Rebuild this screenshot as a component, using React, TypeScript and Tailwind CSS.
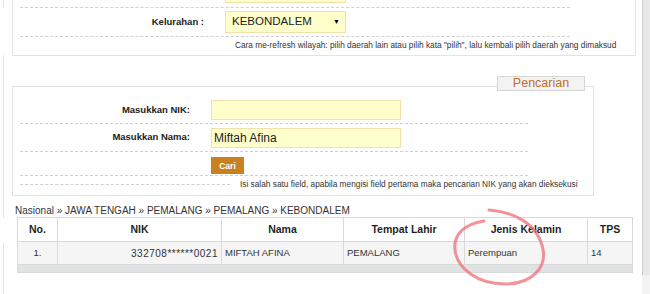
const dash = 'border-b border-dashed border-[#cfcfcf]';

const LeftRule = () => (
	<div className="w-[4px] flex flex-col shrink-0">
		<div className="h-[8px] border-r border-[#e6e6e6]" />
		<div className="h-[47px]" />
		<div className="h-[163px] border-r border-[#e6e6e6]" />
		<div className="h-[25px]" />
		<div className="flex-1 border-r border-[#e6e6e6]" />
	</div>
);

const FormRow = ({ label, labelWidth, children, className }: { label: string; labelWidth: string; children: React.ReactNode; className: string }) => (
	<div className={`flex items-center ${dash} ${className}`}>
		<div className={`${labelWidth} text-right pr-[11px] text-[9.5px] font-bold text-[#222]`}>{label}</div>
		<div className="pl-[10px]">{children}</div>
	</div>
);

const WilayahPanel = () => (
	<div className="ml-[8px] w-[624px] h-[56px] border-x border-b border-[#e3e3e3] px-[7px]">
		<div className="w-[550px]">
			{/* baris sebelumnya, terpotong di atas */}
			<div className={`h-[8px] flex ${dash}`}>
				<div className="w-[195px]" />
				<div className="pl-[10px]">
					<div className="w-[121px] h-[3px] bg-[#ffffcc] border-x border-b border-[#f3e0a8]" />
				</div>
			</div>
			<FormRow label="Kelurahan :" labelWidth="w-[195px]" className="h-[29px]">
				<div className="w-[121px] h-[22px] bg-[#ffffcc] border border-[#f3e0a8] flex items-center justify-between pl-[6px] pr-[5px]">
					<span className="text-[11.5px] text-[#222]">KEBONDALEM</span>
					<span className="text-[7px] text-black">▼</span>
				</div>
			</FormRow>
		</div>
		<div className="pl-[215px] pt-[2px] text-[8.3px] leading-[12px] whitespace-nowrap text-[#333]">
			Cara me-refresh wilayah: pilih daerah lain atau pilih kata "pilih", lalu kembali pilih daerah yang dimaksud
		</div>
	</div>
);

const SearchPanel = () => (
	<div className="ml-[8px] w-[582px] mt-[20px]">
		{/* judul */}
		<div className="flex h-[11px]">
			<div className="flex-1 border-b border-[#e0e0e0]" />
			<div className="w-[88px] h-[15px] shrink-0 border border-[#d6d6d6] bg-[#f3f3f3] text-[12.5px] leading-[13px] text-center text-[#bf6f28]">
				Pencarian
			</div>
			<div className="w-[9px] border-b border-[#e0e0e0]" />
		</div>
		<div className="h-[109px] border-x border-b border-[#e3e3e3] px-[7px] pt-[10px]">
			<div className="w-[508px]">
				<FormRow label="Masukkan NIK:" labelWidth="w-[181px]" className="h-[27px]">
					<div className="w-[190px] h-[20px] bg-[#ffffcc] border border-[#f3e0a8]" />
				</FormRow>
				<FormRow label="Masukkan Nama:" labelWidth="w-[181px]" className="h-[28px]">
					<div className="w-[190px] h-[20px] bg-[#ffffcc] border border-[#f3e0a8] flex items-center pl-[2px] text-[12px] text-[#222]">
						Miftah Afina
					</div>
				</FormRow>
				<FormRow label="" labelWidth="w-[181px]" className="h-[24px]">
					<button className="w-[33px] h-[17px] bg-[#c9801f] text-white text-[8.5px] font-bold leading-none">Cari</button>
				</FormRow>
			</div>
			<div className="flex items-center h-[17px]">
				<div className={`w-[210px] ${dash}`} />
				<div className="pl-[10px] text-[8.3px] whitespace-nowrap text-[#333]">
					Isi salah satu field, apabila mengisi field pertama maka pencarian NIK yang akan dieksekusi
				</div>
			</div>
		</div>
	</div>
);

const cols = [
	{ title: 'No.', w: 'w-[40px]' },
	{ title: 'NIK', w: 'w-[164px]' },
	{ title: 'Nama', w: 'w-[122px]' },
	{ title: 'Tempat Lahir', w: 'w-[121px]' },
	{ title: 'Jenis Kelamin', w: 'w-[123px]' },
	{ title: 'TPS', w: 'w-[45px]' }
];

const ResultTable = () => (
	<table className="ml-[13px] w-[615px] table-fixed border-collapse">
		<thead>
			<tr className="h-[24px]">
				{cols.map((c) => (
					<th key={c.title} className={`${c.w} border border-[#d9d9d9] text-[10.5px] font-bold text-[#1f1f1f] text-center p-0`}>
						{c.title}
					</th>
				))}
			</tr>
		</thead>
		<tbody className="text-[9.5px] text-[#333]">
			<tr className="h-[23px] bg-[#f5f5f5]">
				<td className="border border-[#d9d9d9] text-center p-0">1.</td>
				<td className="border border-[#d9d9d9] text-right pr-[3px] tracking-[0.5px] text-[10px]">332708******0021</td>
				<td className="border border-[#d9d9d9] pl-[3px]">MIFTAH AFINA</td>
				<td className="border border-[#d9d9d9] pl-[3px]">PEMALANG</td>
				<td className="border border-[#d9d9d9] pl-[3px]">Perempuan</td>
				<td className="border border-[#d9d9d9] pl-[3px]">14</td>
			</tr>
			<tr className="h-[8px]">
				<td colSpan={6} className="border border-[#d6dada] bg-[#dfe3e3] p-0" />
			</tr>
		</tbody>
	</table>
);

const App = () => {
	return (
		<div className="relative w-[650px] h-[294px] overflow-hidden bg-white flex font-['Liberation_Sans',Arial,sans-serif] text-[#333]">
			<LeftRule />

			<div className="w-[638px] flex flex-col">
				<WilayahPanel />
				<SearchPanel />

				{/* breadcrumb */}
				<div className="pl-[11px] pt-[9px] text-[10px] leading-[12px] text-[#333] whitespace-nowrap">
					Nasional » JAWA TENGAH » PEMALANG » PEMALANG » KEBONDALEM
				</div>

				<ResultTable />
			</div>

			{/* scrollbar */}
			<div className="w-[8px] flex flex-col">
				<div className="h-[275px] bg-[#e8e8e8] border-l border-[#cdcdcd]" />
				<div className="flex-1 bg-[#f3f3f3]" />
			</div>

			{/* coretan tangan */}
			<svg className="absolute left-0 top-0 pointer-events-none" width="650" height="294" viewBox="0 0 650 294">
				<path
					d="M 489 210 C 515 212, 536 224, 542 245 C 549 268, 531 284, 505 284 C 477 284, 457 268, 455 250 C 453 234, 465 224, 484 221"
					fill="none"
					stroke="#ee6f78"
					strokeOpacity="0.75"
					strokeWidth="3"
					strokeLinecap="round"
				/>
			</svg>
		</div>
	);
};

export default App;
